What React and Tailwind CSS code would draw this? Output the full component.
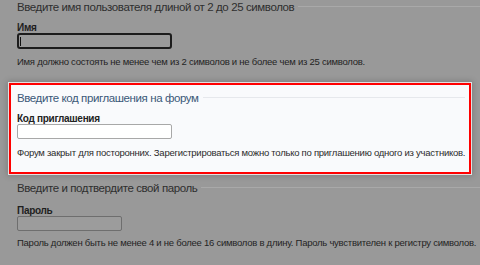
import React from "react";

function Heading({ children, color, line, mt }) {
  return (
    <div className={`flex items-start ${mt}`}>
      <div className={`pl-[17px] pr-[4px] text-[11.5px] leading-[15px] tracking-[-0.4px] whitespace-nowrap ${color}`}>{children}</div>
      <div className={`flex-1 h-px mt-[6px] ${line}`} />
    </div>
  );
}

export default function App() {
  return (
    <div
      className="w-[480px] h-[265px] overflow-hidden bg-[#999999] text-[#262626]"
      style={{ fontFamily: '"Liberation Sans", Arial, sans-serif' }}
    >
      {/* Section 1 */}
      <Heading color="text-[#2e2e2e]" line="bg-[#a9a9a9]" mt="mt-0">
        Введите имя пользователя длиной от 2 до 25 символов
      </Heading>
      <div className="pl-[17px]">
        <div className="mt-[7px] text-[10px] leading-[11px] tracking-[-0.3px] font-bold text-[#1f1f1f]">Имя</div>
        <div className="relative w-[155px] h-[16px] border-2 border-[#1c1c1c] rounded-[3px] bg-[#9a9a9a]">
          <div className="absolute left-[1px] top-[2px] w-px h-[9px] bg-[#111]" />
        </div>
        <div className="mt-[6px] text-[9.5px] leading-[13px] tracking-[-0.25px] text-[#242424]">
          Имя должно состоять не менее чем из 2 символов и не более чем из 25 символов.
        </div>
      </div>

      {/* Highlighted section */}
      <div className="mt-[15px] ml-[9px] w-[462px] h-[91px] border-2 border-[#ff0000] bg-[#f9fafc] shadow-[0_0_0_1px_rgba(255,255,255,0.75),0_0_6px_2px_rgba(0,0,0,0.18)] pt-[6px]">
        <div className="-ml-[11px] pr-[4px]">
          <Heading color="text-[#3a5878]" line="bg-[#e6e8ec]" mt="mt-0">
            Введите код приглашения на форум
          </Heading>
        </div>
        <div className="pl-[6px]">
          <div className="mt-[7px] text-[10px] leading-[11px] tracking-[-0.3px] font-bold text-[#222]">Код приглашения</div>
          <div className="w-[155px] h-[15px] border border-[#a8a8a8] rounded-[2px] bg-white" />
          <div className="mt-[7px] text-[9.5px] leading-[13px] tracking-[-0.25px] text-[#2b2b2b] whitespace-nowrap">
            Форум закрыт для посторонних. Зарегистрироваться можно только по приглашению одного из участников.
          </div>
        </div>
      </div>

      {/* Section 3 */}
      <Heading color="text-[#2e2e2e]" line="bg-[#a9a9a9]" mt="mt-[7px]">
        Введите и подтвердите свой пароль
      </Heading>
      <div className="pl-[17px]">
        <div className="mt-[9px] text-[10px] leading-[11px] tracking-[-0.3px] font-bold text-[#1f1f1f]">Пароль</div>
        <div className="w-[105px] h-[15px] border border-[#6e6e6e] rounded-[2px] bg-[#9c9c9c]" />
        <div className="mt-[5px] text-[9.5px] leading-[13px] tracking-[-0.25px] text-[#242424] whitespace-nowrap">
          Пароль должен быть не менее 4 и не более 16 символов в длину. Пароль чувствителен к регистру символов.
        </div>
      </div>
    </div>
  );
}
